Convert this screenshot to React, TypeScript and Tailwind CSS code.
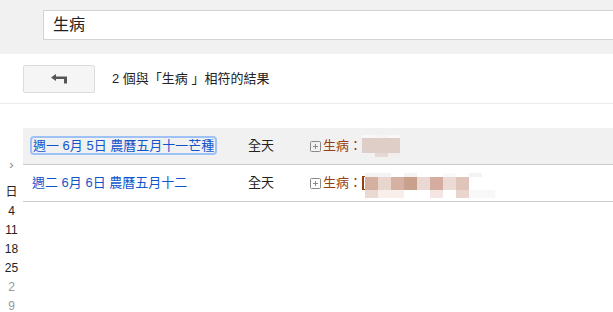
import React from 'react'

const cjk = { fontFamily: '"Liberation Sans", "Noto Sans CJK TC", sans-serif' }

type Block = { x: number; y: number; w: number; h: number; c: string }

const mosaic1: Block[] = [
    { x: 0, y: 0, w: 13, h: 3, c: '#f8f8f8' },
    { x: 13, y: 0, w: 13, h: 3, c: '#f6f3f2' },
    { x: 26, y: 0, w: 12, h: 3, c: '#f8f8f8' },
    { x: 0, y: 3, w: 38, h: 15, c: '#dfcec8' },
    { x: 13, y: 18, w: 13, h: 4, c: '#e6d8d3' },
    { x: 26, y: 18, w: 12, h: 4, c: '#f1eeed' },
]

const mosaic2: Block[] = [
    { x: 0, y: 0, w: 26, h: 4, c: '#f3f3f3' },
    { x: 39, y: 0, w: 13, h: 4, c: '#f3f3f3' },
    { x: 78, y: 0, w: 13, h: 4, c: '#f9f9f9' },
    { x: 104, y: 0, w: 13, h: 4, c: '#f3f3f3' },
    { x: 0, y: 4, w: 13, h: 13, c: '#d4b0a0' },
    { x: 13, y: 4, w: 13, h: 13, c: '#e8d5ce' },
    { x: 26, y: 4, w: 13, h: 13, c: '#d4b1a3' },
    { x: 39, y: 4, w: 13, h: 13, c: '#c8a08c' },
    { x: 52, y: 4, w: 13, h: 13, c: '#ead8d2' },
    { x: 65, y: 4, w: 13, h: 13, c: '#d4ada0' },
    { x: 78, y: 4, w: 13, h: 13, c: '#eadbd6' },
    { x: 91, y: 4, w: 13, h: 13, c: '#dfc4b9' },
    { x: 0, y: 17, w: 13, h: 8, c: '#ead8d2' },
    { x: 13, y: 17, w: 26, h: 8, c: '#f8eeea' },
    { x: 65, y: 17, w: 13, h: 8, c: '#f3e5e1' },
    { x: 91, y: 17, w: 13, h: 8, c: '#e9d5ce' },
    { x: 104, y: 17, w: 26, h: 8, c: '#f8f8f8' },
]

const Mosaic = ({ blocks, w, h, top }: { blocks: Block[]; w: number; h: number; top: number }) => (
    <span className="relative inline-block" style={{ width: w, height: h, top }}>
        {blocks.map((b, i) => (
            <span
                key={i}
                className="absolute"
                style={{ left: b.x, top: b.y, width: b.w, height: b.h, background: b.c }}
            />
        ))}
    </span>
)

const PlusBox = () => (
    <svg width="11" height="11" viewBox="0 0 11 11" className="mr-[2px]">
        <rect x="0.5" y="0.5" width="10" height="10" rx="1" fill="none" stroke="#8a8a8a" />
        <path d="M3 5.5h5M5.5 3v5" stroke="#8a8a8a" />
    </svg>
)

const BackArrow = () => (
    <svg width="17" height="10" viewBox="0 0 17 10">
        <path d="M0 3.5L5 0v7z" fill="#555" />
        <path d="M4 2.5h12v7h-3V5H4z" fill="#555" />
    </svg>
)

export default function App() {
    return (
        <div className="w-[613px] h-[312px] overflow-hidden bg-white text-[#222]" style={cjk}>
            <div className="h-[54px] bg-[#f1f1f1] pt-[10px] pl-[43px]">
                <div className="h-[30px] bg-white border border-[#d3d3d3] border-r-0 flex items-center pl-[9px] text-[16px] text-[#222]">
                    生病
                </div>
            </div>

            <div className="flex items-center h-[49px] pl-[23px]">
                <button className="w-[72px] h-[28px] bg-[#f5f5f5] border border-[#dcdcdc] rounded-[2px] flex items-center justify-center">
                    <BackArrow />
                </button>
                <span className="ml-[17px] text-[13px]">2 個與「生病 」相符的結果</span>
            </div>
            <div className="h-px bg-[#ebebeb]" />

            <div className="flex">
                <div className="w-[23px] flex flex-col items-center text-[12px] pt-[53px]">
                    <span className="text-[#888] text-[13px] leading-[16px] mb-[10px]">›</span>
                    <span className="leading-[19px] text-[12px]">日</span>
                    <span className="leading-[19px]">4</span>
                    <span className="leading-[19px]">11</span>
                    <span className="leading-[19px]">18</span>
                    <span className="leading-[19px]">25</span>
                    <span className="leading-[19px] text-[#999]">2</span>
                    <span className="leading-[19px] text-[#999]">9</span>
                </div>
                <div className="flex-1 pt-[24px] text-[13px]">
                    <div className="flex items-center h-[37px] bg-[#f1f1f1] border-b border-[#cccccc]">
                        <div className="w-[225px] pl-[9px]">
                            <span className="text-[#1155cc] outline outline-2 outline-[#9ec2f7] rounded-[2px] px-[1px]">
                                週一 6月 5日 農曆五月十一芒種
                            </span>
                        </div>
                        <div className="w-[62px]">全天</div>
                        <div className="flex items-center text-[#993d12]">
                            <PlusBox />
                            <span>生病：</span>
                            <Mosaic blocks={mosaic1} w={38} h={22} top={0} />
                        </div>
                    </div>
                    <div className="flex items-center h-[37px] border-b border-[#cccccc]">
                        <div className="w-[225px] pl-[9px]">
                            <span className="text-[#1155cc]">週二 6月 6日 農曆五月十二</span>
                        </div>
                        <div className="w-[62px]">全天</div>
                        <div className="flex items-center text-[#993d12]">
                            <PlusBox />
                            <span>生病：</span>
                            <span className="relative inline-block w-[3px] h-[14px] border-l-2 border-y border-[#993d12]" />
                            <Mosaic blocks={mosaic2} w={130} h={25} top={2} />
                        </div>
                    </div>
                </div>
            </div>
        </div>
    )
}
